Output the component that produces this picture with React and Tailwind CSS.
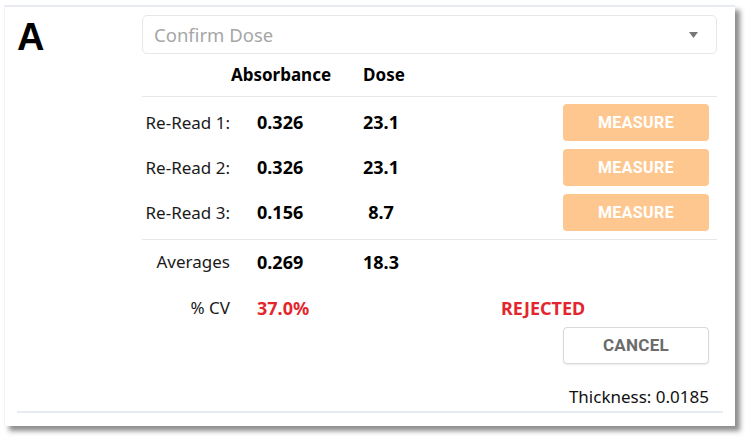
import React from 'react';

const rows = [
  { label: 'Re-Read 1:', abs: '0.326', dose: '23.1' },
  { label: 'Re-Read 2:', abs: '0.326', dose: '23.1' },
  { label: 'Re-Read 3:', abs: '0.156', dose: '8.7' },
];

const font = { fontFamily: '"Noto Sans", "Open Sans", sans-serif' };

const MeasureButton = () => (
  <button className="w-[146px] h-[37px] rounded-[4px] bg-[#fec78f] text-white font-bold text-[16px] tracking-[0.4px] font-['Roboto',sans-serif]">
    MEASURE
  </button>
);

export default function App() {
  return (
    <div className="w-[748px] h-[439px] bg-white pt-[5px] pl-[4px]" style={font}>
      <div className="w-[731px] h-[421px] bg-white border-t-2 border-[#e8ecf0] border-l border-l-[#f3f4f6] shadow-[5px_5px_5px_rgba(0,0,0,0.45)] flex flex-col px-[12px]">
        <div className="flex flex-1">
          <div className="w-[125px] pt-[11px]">
            <span className="text-[38px] font-bold leading-none text-black font-['Liberation_Sans',sans-serif]">A</span>
          </div>

          <div className="w-[575px] pt-[8px] flex flex-col">
            <div className="h-[39px] rounded-[5px] border border-[#e5e7eb] flex items-center justify-between pl-[11px] pr-[18px]">
              <span className="text-[18.5px] text-[#a6a6a6]">Confirm Dose</span>
              <svg width="9" height="6" viewBox="0 0 9 6">
                <path d="M0 0 L9 0 L4.5 6 Z" fill="#777" />
              </svg>
            </div>

            <div className="flex h-[42px] items-center text-[17px] font-bold text-black">
              <span className="w-[88px]" />
              <span className="w-[102px] text-center">Absorbance</span>
              <span className="w-[30px]" />
              <span className="w-[44px] text-center">Dose</span>
            </div>

            <div className="border-t border-[#e5e7eb]" />

            <div className="flex flex-col gap-[8px] pt-[7px] pb-[8px]">
              {rows.map((r) => (
                <div key={r.label} className="flex items-center h-[37px] text-[17px]">
                  <span className="w-[88px] text-right text-[#1a1a1a]">{r.label}</span>
                  <span className="w-[80px] ml-[27px] text-[18px] font-bold text-black">{r.abs}</span>
                  <span className="w-[88px] text-center text-[18px] font-bold text-black">{r.dose}</span>
                  <span className="flex-1" />
                  <span className="mr-[8px]"><MeasureButton /></span>
                </div>
              ))}
            </div>

            <div className="border-t border-[#e5e7eb]" />

            <div className="flex items-center h-[42px] text-[17px] mt-[1px]">
              <span className="w-[88px] text-right text-[#1a1a1a]">Averages</span>
              <span className="w-[80px] ml-[27px] text-[18px] font-bold text-black">0.269</span>
              <span className="w-[88px] text-center text-[18px] font-bold text-black">18.3</span>
            </div>

            <div className="flex items-center h-[42px] text-[17px] mt-[4px]">
              <span className="w-[88px] text-right text-[#1a1a1a]">% CV</span>
              <span className="w-[80px] ml-[27px] text-[18px] font-bold text-[#e3262d]">37.0%</span>
              <span className="w-[88px]" />
              <span className="ml-[76px] text-[18px] font-bold text-[#e3262d]">REJECTED</span>
            </div>

            <div className="flex justify-end pr-[8px] mt-[-2px]">
              <button className="w-[146px] h-[37px] rounded-[4px] border border-[#d9d9d9] bg-white text-[#6b6b6b] font-bold text-[17px] tracking-[0.3px] font-['Roboto',sans-serif] shadow-[0_1px_2px_rgba(0,0,0,0.08)]">
                CANCEL
              </button>
            </div>

            <div className="flex justify-end pr-[8px] mt-[20px] text-[17px] text-[#111]">
              Thickness: 0.0185
            </div>
          </div>
        </div>
        <div className="border-t-2 border-[#e8ecf0] mb-[13px]" />
      </div>
    </div>
  );
}
